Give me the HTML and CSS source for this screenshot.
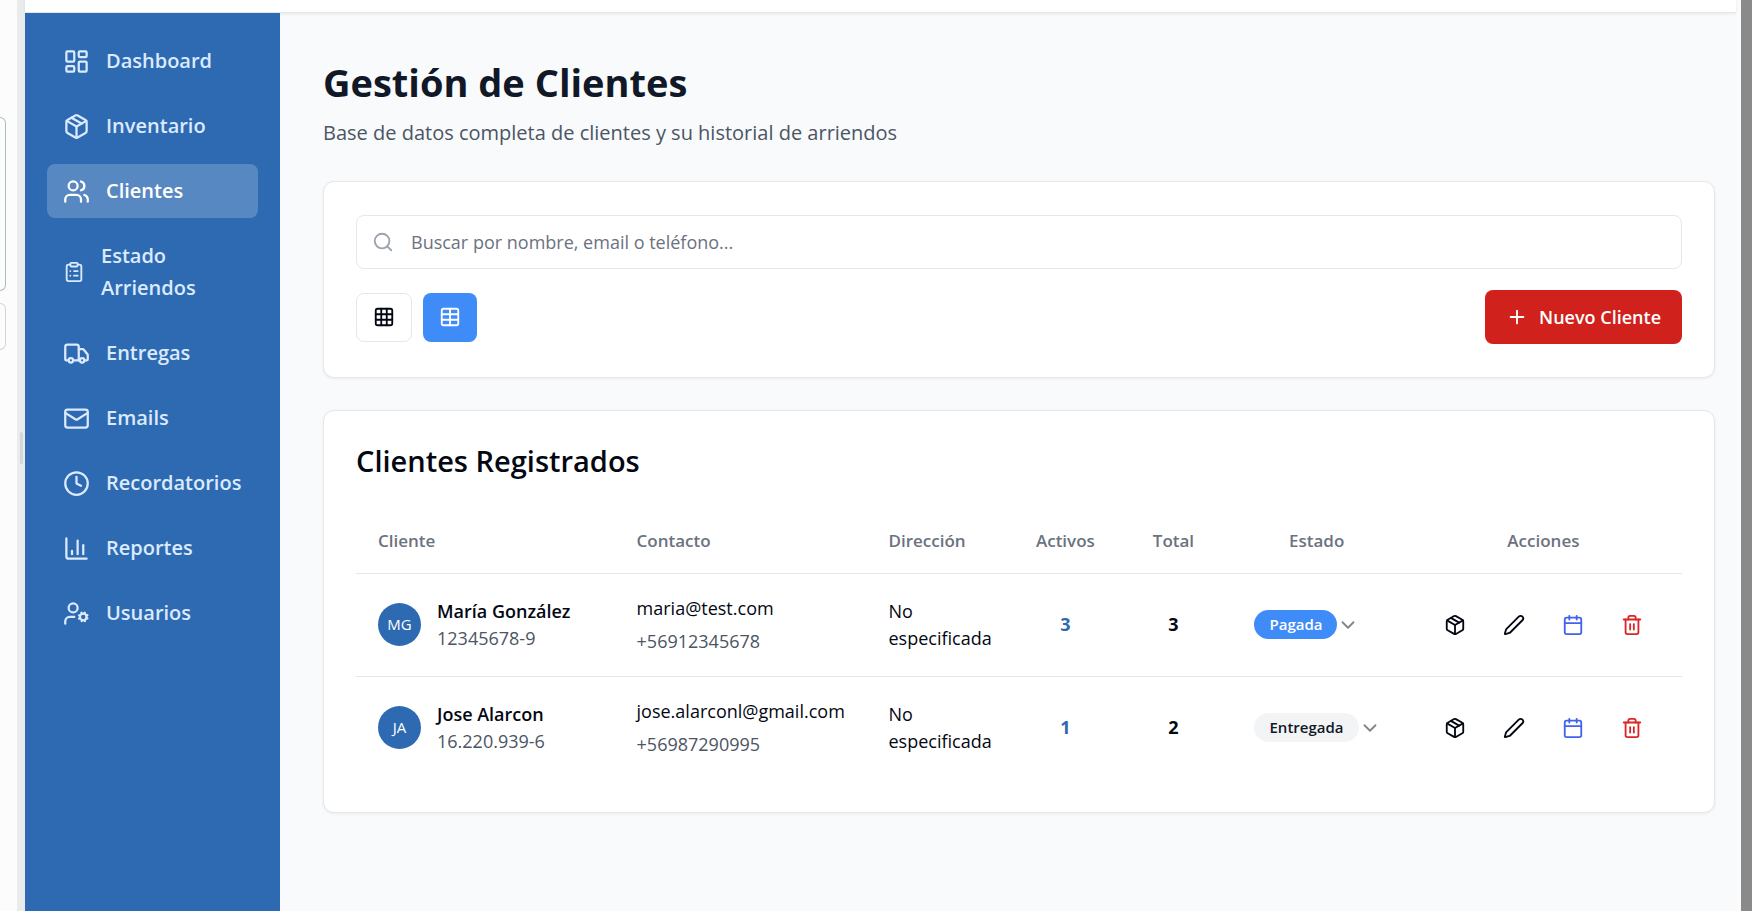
FILE: index.html
```html
<!DOCTYPE html>
<html lang="es">
<head>
<meta charset="utf-8">
<title>Gestión de Clientes</title>
<link rel="stylesheet" href="styles.css">
</head>
<body>
<svg class="sprite" aria-hidden="true">
  <symbol id="i-dashboard" viewBox="0 0 24 24"><rect width="7" height="9" x="3" y="3" rx="1"/><rect width="7" height="5" x="14" y="3" rx="1"/><rect width="7" height="9" x="14" y="12" rx="1"/><rect width="7" height="5" x="3" y="16" rx="1"/></symbol>
  <symbol id="i-package" viewBox="0 0 24 24"><path d="m7.5 4.27 9 5.15"/><path d="M21 8a2 2 0 0 0-1-1.73l-7-4a2 2 0 0 0-2 0l-7 4A2 2 0 0 0 3 8v8a2 2 0 0 0 1 1.73l7 4a2 2 0 0 0 2 0l7-4A2 2 0 0 0 21 16Z"/><path d="m3.3 7 8.7 5 8.7-5"/><path d="M12 22V12"/></symbol>
  <symbol id="i-users" viewBox="0 0 24 24"><path d="M16 21v-2a4 4 0 0 0-4-4H6a4 4 0 0 0-4 4v2"/><circle cx="9" cy="7" r="4"/><path d="M22 21v-2a4 4 0 0 0-3-3.87"/><path d="M16 3.13a4 4 0 0 1 0 7.75"/></symbol>
  <symbol id="i-clipboard" viewBox="0 0 24 24"><rect width="8" height="4" x="8" y="2" rx="1"/><path d="M16 4h2a2 2 0 0 1 2 2v14a2 2 0 0 1-2 2H6a2 2 0 0 1-2-2V6a2 2 0 0 1 2-2h2"/><path d="M12 11h4"/><path d="M12 16h4"/><path d="M8 11h.01"/><path d="M8 16h.01"/></symbol>
  <symbol id="i-truck" viewBox="0 0 24 24"><path d="M14 18V6a2 2 0 0 0-2-2H4a2 2 0 0 0-2 2v11a1 1 0 0 0 1 1h2"/><path d="M15 18H9"/><path d="M19 18h2a1 1 0 0 0 1-1v-3.65a1 1 0 0 0-.22-.624l-3.48-4.35A1 1 0 0 0 17.52 8H14"/><circle cx="17" cy="18" r="2"/><circle cx="7" cy="18" r="2"/></symbol>
  <symbol id="i-mail" viewBox="0 0 24 24"><rect width="20" height="16" x="2" y="4" rx="2"/><path d="m22 7-8.97 5.7a1.94 1.94 0 0 1-2.06 0L2 7"/></symbol>
  <symbol id="i-clock" viewBox="0 0 24 24"><circle cx="12" cy="12" r="10"/><path d="M12 6v6l4 2"/></symbol>
  <symbol id="i-chart" viewBox="0 0 24 24"><path d="M3 3v16a2 2 0 0 0 2 2h16"/><path d="M18 17V9"/><path d="M13 17V5"/><path d="M8 17v-3"/></symbol>
  <symbol id="i-usercog" viewBox="0 0 24 24"><circle cx="18" cy="15" r="3"/><circle cx="9" cy="7" r="4"/><path d="M10 15H6a4 4 0 0 0-4 4v2"/><path d="m21.7 16.4-.9-.3"/><path d="m15.2 13.9-.9-.3"/><path d="m16.6 18.7.3-.9"/><path d="m19.1 12.2.3-.9"/><path d="m19.6 18.7-.4-1"/><path d="m16.8 12.3-.4-1"/><path d="m14.3 16.6 1-.4"/><path d="m20.7 13.8 1-.4"/></symbol>
  <symbol id="i-search" viewBox="0 0 24 24"><circle cx="11" cy="11" r="8"/><path d="m21 21-4.3-4.3"/></symbol>
  <symbol id="i-grid" viewBox="0 0 24 24"><rect width="18" height="18" x="3" y="3" rx="2"/><path d="M3 9h18"/><path d="M3 15h18"/><path d="M9 3v18"/><path d="M15 3v18"/></symbol>
  <symbol id="i-table" viewBox="0 0 24 24"><path d="M12 3v18"/><rect width="18" height="18" x="3" y="3" rx="2"/><path d="M3 9h18"/><path d="M3 15h18"/></symbol>
  <symbol id="i-plus" viewBox="0 0 24 24"><path d="M5 12h14"/><path d="M12 5v14"/></symbol>
  <symbol id="i-chevron" viewBox="0 0 24 24"><path d="m6 9 6 6 6-6"/></symbol>
  <symbol id="i-pencil" viewBox="0 0 24 24"><path d="M21.174 6.812a1 1 0 0 0-3.986-3.987L3.842 16.174a2 2 0 0 0-.5.83l-1.321 4.352a.5.5 0 0 0 .623.622l4.353-1.32a2 2 0 0 0 .83-.497z"/></symbol>
  <symbol id="i-calendar" viewBox="0 0 24 24"><path d="M8 2v4"/><path d="M16 2v4"/><rect width="18" height="18" x="3" y="4" rx="2"/><path d="M3 10h18"/></symbol>
  <symbol id="i-trash" viewBox="0 0 24 24"><path d="M3 6h18"/><path d="M19 6v14a2 2 0 0 1-2 2H7a2 2 0 0 1-2-2V6"/><path d="M8 6V4a2 2 0 0 1 2-2h4a2 2 0 0 1 2 2v2"/><path d="M10 11v6"/><path d="M14 11v6"/></symbol>
</svg>

<div class="window">
  <div class="side-panel" aria-hidden="true">
    <div class="side-box side-box-active"></div>
    <div class="side-box side-box-small"></div>
  </div>
  <div class="splitter" aria-hidden="true"><span class="splitter-handle"></span></div>

  <div class="app">
    <header class="topbar"></header>
    <div class="body">
      <nav class="sidebar" aria-label="Principal">
        <a class="nav-item" href="#dashboard"><svg class="icon"><use href="#i-dashboard"/></svg>Dashboard</a>
        <a class="nav-item" href="#inventario"><svg class="icon"><use href="#i-package"/></svg>Inventario</a>
        <a class="nav-item nav-item-active" href="#clientes" aria-current="page"><svg class="icon"><use href="#i-users"/></svg>Clientes</a>
        <a class="nav-item" href="#arriendos"><svg class="icon icon-small"><use href="#i-clipboard"/></svg>Estado Arriendos</a>
        <a class="nav-item" href="#entregas"><svg class="icon"><use href="#i-truck"/></svg>Entregas</a>
        <a class="nav-item" href="#emails"><svg class="icon"><use href="#i-mail"/></svg>Emails</a>
        <a class="nav-item" href="#recordatorios"><svg class="icon"><use href="#i-clock"/></svg>Recordatorios</a>
        <a class="nav-item" href="#reportes"><svg class="icon"><use href="#i-chart"/></svg>Reportes</a>
        <a class="nav-item" href="#usuarios"><svg class="icon"><use href="#i-usercog"/></svg>Usuarios</a>
      </nav>

      <main class="main">
        <div class="page-head">
          <h1 class="page-title">Gestión de Clientes</h1>
          <p class="page-subtitle">Base de datos completa de clientes y su historial de arriendos</p>
        </div>

        <section class="card filters">
          <label class="search">
            <svg class="icon icon-small"><use href="#i-search"/></svg>
            <input class="search-input" type="text" aria-label="Buscar clientes" placeholder="Buscar por nombre, email o teléfono...">
          </label>
          <div class="toolbar">
            <div class="view-toggle">
              <button class="view-button" type="button" aria-label="Vista de tarjetas"><svg class="icon icon-small"><use href="#i-grid"/></svg></button>
              <button class="view-button view-button-active" type="button" aria-label="Vista de tabla"><svg class="icon icon-small"><use href="#i-table"/></svg></button>
            </div>
            <button class="primary-button" type="button"><svg class="icon icon-small"><use href="#i-plus"/></svg>Nuevo Cliente</button>
          </div>
        </section>

        <section class="card">
          <h2 class="card-title">Clientes Registrados</h2>
          <table class="clients">
            <colgroup>
              <col class="col-client"><col class="col-contact"><col class="col-address"><col class="col-active"><col class="col-total"><col class="col-status"><col class="col-actions">
            </colgroup>
            <thead>
              <tr><th>Cliente</th><th>Contacto</th><th>Dirección</th><th class="center">Activos</th><th class="center">Total</th><th class="center">Estado</th><th class="center">Acciones</th></tr>
            </thead>
            <tbody>
              <tr>
                <td>
                  <div class="client">
                    <span class="avatar">MG</span>
                    <div><div class="client-name">María González</div><div class="muted">12345678-9</div></div>
                  </div>
                </td>
                <td><div class="contact"><span>maria@test.com</span><span class="muted">+56912345678</span></div></td>
                <td>No especificada</td>
                <td class="center count count-active">3</td>
                <td class="center count">3</td>
                <td><button class="status" type="button"><span class="badge badge-paid">Pagada</span><svg class="icon icon-chevron"><use href="#i-chevron"/></svg></button></td>
                <td>
                  <div class="actions">
                    <button class="action" type="button" aria-label="Ver arriendos"><svg class="icon icon-small"><use href="#i-package"/></svg></button>
                    <button class="action" type="button" aria-label="Editar"><svg class="icon icon-small"><use href="#i-pencil"/></svg></button>
                    <button class="action action-blue" type="button" aria-label="Agendar"><svg class="icon icon-small"><use href="#i-calendar"/></svg></button>
                    <button class="action action-red" type="button" aria-label="Eliminar"><svg class="icon icon-small"><use href="#i-trash"/></svg></button>
                  </div>
                </td>
              </tr>
              <tr>
                <td>
                  <div class="client">
                    <span class="avatar">JA</span>
                    <div><div class="client-name">Jose Alarcon</div><div class="muted">16.220.939-6</div></div>
                  </div>
                </td>
                <td><div class="contact"><span>jose.alarconl@gmail.com</span><span class="muted">+56987290995</span></div></td>
                <td>No especificada</td>
                <td class="center count count-active">1</td>
                <td class="center count">2</td>
                <td><button class="status" type="button"><span class="badge">Entregada</span><svg class="icon icon-chevron"><use href="#i-chevron"/></svg></button></td>
                <td>
                  <div class="actions">
                    <button class="action" type="button" aria-label="Ver arriendos"><svg class="icon icon-small"><use href="#i-package"/></svg></button>
                    <button class="action" type="button" aria-label="Editar"><svg class="icon icon-small"><use href="#i-pencil"/></svg></button>
                    <button class="action action-blue" type="button" aria-label="Agendar"><svg class="icon icon-small"><use href="#i-calendar"/></svg></button>
                    <button class="action action-red" type="button" aria-label="Eliminar"><svg class="icon icon-small"><use href="#i-trash"/></svg></button>
                  </div>
                </td>
              </tr>
            </tbody>
          </table>
        </section>
      </main>
    </div>
  </div>

  <div class="scroll-edge" aria-hidden="true"></div>
</div>
</body>
</html>
```
FILE: styles.css
```css
*,
*::before,
*::after {
  box-sizing: border-box;
}

body {
  margin: 0;
  background: #fcfcfc;
  color: #030712;
  font-family: "Open Sans", "Noto Sans", sans-serif;
  font-size: 18px;
  line-height: 27px;
}

h1,
h2,
p {
  margin: 0;
}

button,
input {
  font: inherit;
  color: inherit;
}

button {
  border: 0;
  padding: 0;
  background: none;
  cursor: pointer;
}

.sprite {
  position: absolute;
  width: 0;
  height: 0;
}

.icon {
  flex: none;
  width: 27px;
  height: 27px;
  fill: none;
  stroke: currentColor;
  stroke-width: 2;
  stroke-linecap: round;
  stroke-linejoin: round;
}

.icon-small {
  width: 22px;
  height: 22px;
}

.icon-chevron {
  width: 22px;
  height: 22px;
  color: #83858a;
}

.window {
  display: flex;
  min-height: 100vh;
}

/* Edge of the neighbouring panel and its splitter */
.side-panel {
  display: flex;
  flex: none;
  flex-direction: column;
  gap: 12px;
  width: 17px;
  padding: 117px 11px 0 0;
  overflow: hidden;
}

.side-box {
  height: 174px;
  border: 1px solid #a9c0ac;
  border-left: 0;
  border-radius: 0 11px 11px 0;
}

.side-box-small {
  height: 47px;
  border-color: #d3d5d5;
}

.splitter {
  display: flex;
  flex: none;
  justify-content: flex-end;
  width: 8px;
  padding: 432px 2px 0 0;
  background: #e9ebec;
}

.splitter-handle {
  width: 3px;
  height: 32px;
  border-radius: 2px;
  background: #d4d6d7;
}

.scroll-edge {
  flex: none;
  width: 16px;
  border-left: 5px solid #fbfbfc;
  background: #8a8a8a;
}

.app {
  display: flex;
  flex: 1;
  flex-direction: column;
  min-width: 0;
}

.topbar {
  position: relative;
  height: 13px;
  border-bottom: 1px solid #e5e7eb;
  background: #fff;
  box-shadow: 0 1px 3px rgba(0, 0, 0, 0.08);
}

.body {
  display: flex;
  flex: 1;
}

/* Navigation */
.sidebar {
  display: flex;
  flex: none;
  flex-direction: column;
  gap: 11px;
  width: 255px;
  padding: 21px 22px;
  background: #2e6ab1;
  z-index: 1;
}

.nav-item {
  display: flex;
  align-items: center;
  gap: 16px;
  padding: 11px 16px;
  border-radius: 8px;
  color: #dbeafe;
  font-size: 20px;
  font-weight: 600;
  line-height: 32px;
  text-decoration: none;
}

.nav-item-active {
  background: #5888c1;
  color: #fff;
}

/* Content */
.main {
  display: flex;
  flex: 1;
  flex-direction: column;
  gap: 32px;
  min-width: 0;
  padding: 42px 21px 42px 43px;
  background: #f9fafc;
}

.page-title {
  color: #111827;
  font-size: 38px;
  font-weight: 700;
  line-height: 54px;
}

.page-subtitle {
  margin-top: 8px;
  color: #4b5563;
  font-size: 20px;
  line-height: 32px;
}

.card {
  padding: 33px 32px;
  border: 1px solid #e5e7eb;
  border-radius: 11px;
  background: #fff;
  box-shadow: 0 1px 3px rgba(0, 0, 0, 0.06);
}

.filters {
  display: flex;
  flex-direction: column;
  gap: 21px;
}

.search {
  display: flex;
  align-items: center;
  gap: 17px;
  height: 54px;
  padding: 0 15px;
  border: 1px solid #e5e7eb;
  border-radius: 8px;
  color: #9ca3af;
}

.search-input {
  flex: 1;
  min-width: 0;
  border: 0;
  padding: 0;
  outline: 0;
  background: none;
  color: #030712;
}

.search-input::placeholder {
  color: #6b7280;
  opacity: 1;
}

.toolbar,
.view-toggle,
.view-button,
.primary-button,
.client,
.status,
.actions,
.action,
.avatar {
  display: flex;
  align-items: center;
}

.toolbar {
  justify-content: space-between;
}

.view-toggle {
  gap: 11px;
}

.view-button {
  justify-content: center;
  width: 56px;
  height: 49px;
  border: 1px solid #e5e7eb;
  border-radius: 8px;
}

.view-button-active {
  width: 54px;
  border: 0;
  background: #3f8cf9;
  color: #fff;
}

.primary-button {
  gap: 11px;
  height: 54px;
  padding: 0 21px;
  border-radius: 8px;
  background: #d0211c;
  color: #fff;
  font-weight: 600;
}

.card-title {
  font-size: 29px;
  font-weight: 600;
  line-height: 34px;
}

/* Client table */
.clients {
  width: 100%;
  margin-top: 30px;
  border-collapse: collapse;
  table-layout: fixed;
}

.col-client { width: 19.5%; }
.col-contact { width: 19%; }
.col-address { width: 11%; }
.col-active { width: 8%; }
.col-total { width: 8.3%; }
.col-status { width: 13.3%; }
.col-actions { width: 20.9%; }

.clients th {
  height: 65px;
  padding: 0 22px;
  color: #6b7280;
  font-size: 17px;
  font-weight: 600;
  text-align: left;
}

.clients td {
  padding: 21px 22px;
}

.clients tr {
  border-bottom: 1px solid #e5e7eb;
}

.clients tbody tr:last-child {
  border-bottom: 0;
}

.clients .center {
  text-align: center;
}

.muted {
  color: #4b5563;
}

.client {
  gap: 16px;
  white-space: nowrap;
}

.client-name {
  font-weight: 600;
}

.avatar {
  flex: none;
  justify-content: center;
  width: 43px;
  height: 43px;
  border-radius: 50%;
  background: #2e6ab1;
  color: #fff;
  font-size: 15px;
}

.contact {
  display: flex;
  flex-direction: column;
  gap: 6px;
  white-space: nowrap;
}

.count {
  font-weight: 700;
}

.count-active {
  color: #2e6ab1;
}

.status {
  gap: 0;
  padding-left: 4px;
}

.badge {
  padding: 1px 15px;
  border-radius: 15px;
  background: #f3f4f6;
  color: #111827;
  font-size: 15px;
  font-weight: 600;
}

.badge-paid {
  background: #3f8cf9;
  color: #fff;
}

.actions {
  justify-content: center;
  gap: 11px;
}

.action {
  justify-content: center;
  width: 48px;
  height: 48px;
}

.action-blue {
  color: #4263eb;
}

.action-red {
  color: #dc2626;
}
```
